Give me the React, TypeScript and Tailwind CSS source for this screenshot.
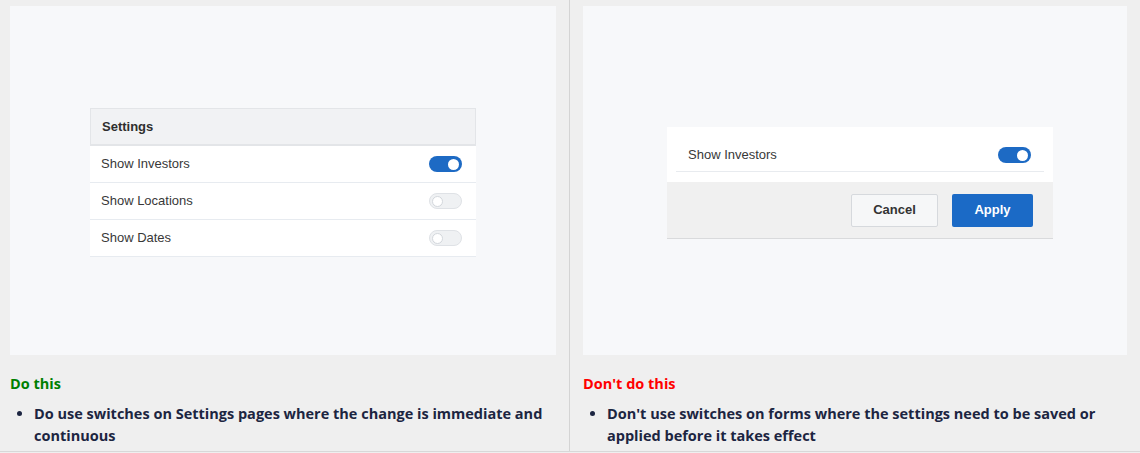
import React from "react";

function Toggle({ on }: { on: boolean }) {
  if (on) {
    return (
      <div className="flex h-[16px] w-[33px] items-center justify-end rounded-full bg-[#1d6ac4] pr-[3px]">
        <div className="h-[11px] w-[11px] rounded-full bg-white" />
      </div>
    );
  }
  return (
    <div className="flex h-[16px] w-[33px] items-center rounded-full border border-[#dfe2e6] bg-[#eff1f3] pl-[2px]">
      <div className="h-[11px] w-[11px] rounded-full border border-[#d3d7dc] bg-white" />
    </div>
  );
}

function SettingsMock() {
  const rows = [
    { label: "Show Investors", on: true },
    { label: "Show Locations", on: false },
    { label: "Show Dates", on: false },
  ];

  return (
    <div className="mt-[4px] w-[386px] font-['Liberation_Sans',Arial,sans-serif] text-[13px] text-[#383838]">
      <div className="flex h-[38px] items-center border border-b-2 border-[#e3e5e8] bg-[#f1f2f4] pl-[11px] font-bold text-[#2e2e2e]">
        Settings
      </div>
      {rows.map(row => (
        <div
          key={row.label}
          className="flex h-[37px] items-center justify-between border-b border-[#e7ebf0] bg-white pl-[11px] pr-[14px]"
        >
          <span>{row.label}</span>
          <Toggle on={row.on} />
        </div>
      ))}
    </div>
  );
}

function FormMock() {
  return (
    <div className="mt-[5px] ml-[10px] w-[386px] font-['Liberation_Sans',Arial,sans-serif] text-[13px] text-[#383838]">
      <div className="bg-white pt-[12px] pb-[10px]">
        <div className="mx-[9px] flex h-[33px] items-center justify-between border-b border-[#e8ebef] pl-[12px] pr-[13px]">
          <span>Show Investors</span>
          <Toggle on />
        </div>
      </div>
      <div className="flex h-[57px] items-center justify-end gap-[14px] border-b border-[#d9dadc] bg-[#f0f0f0] pr-[20px]">
        <button className="h-[33px] w-[87px] rounded-[2px] border border-[#d6d9dd] bg-[#f6f7f8] font-bold text-[#333]">
          Cancel
        </button>
        <button className="h-[33px] w-[81px] rounded-[2px] bg-[#1b6ac6] font-bold text-white">
          Apply
        </button>
      </div>
    </div>
  );
}

function Column({
  title,
  titleColor,
  text,
  children,
  className,
}: {
  title: string;
  titleColor: string;
  text: string;
  children: React.ReactNode;
  className: string;
}) {
  return (
    <div className={className}>
      <div className="flex h-[349px] items-center justify-center bg-[#f7f8fa]">
        {children}
      </div>
      <div className={`mt-[18px] text-[14.5px] font-bold ${titleColor}`}>{title}</div>
      <ul className="mt-[8px] list-disc pl-[24px] text-[14.5px] font-bold leading-[22px] text-[#1c2541]">
        <li>{text}</li>
      </ul>
    </div>
  );
}

export default function App() {
  return (
    <div className="h-[453px] w-[1140px] bg-[#efefef] font-['Open_Sans','Noto_Sans',sans-serif]">
      <div className="flex h-[452px] border-b border-[#d8d8d8]">
        <Column
          className="w-[569px] pt-[6px] pl-[10px] pr-[13px]"
          title="Do this"
          titleColor="text-[#008000]"
          text="Do use switches on Settings pages where the change is immediate and continuous"
        >
          <SettingsMock />
        </Column>
        <div className="w-px bg-[#d4d4d4]" />
        <Column
          className="w-[570px] pt-[6px] pl-[13px] pr-[13px]"
          title="Don't do this"
          titleColor="text-[#ff0000]"
          text="Don't use switches on forms where the settings need to be saved or applied before it takes effect"
        >
          <FormMock />
        </Column>
      </div>
    </div>
  );
}
